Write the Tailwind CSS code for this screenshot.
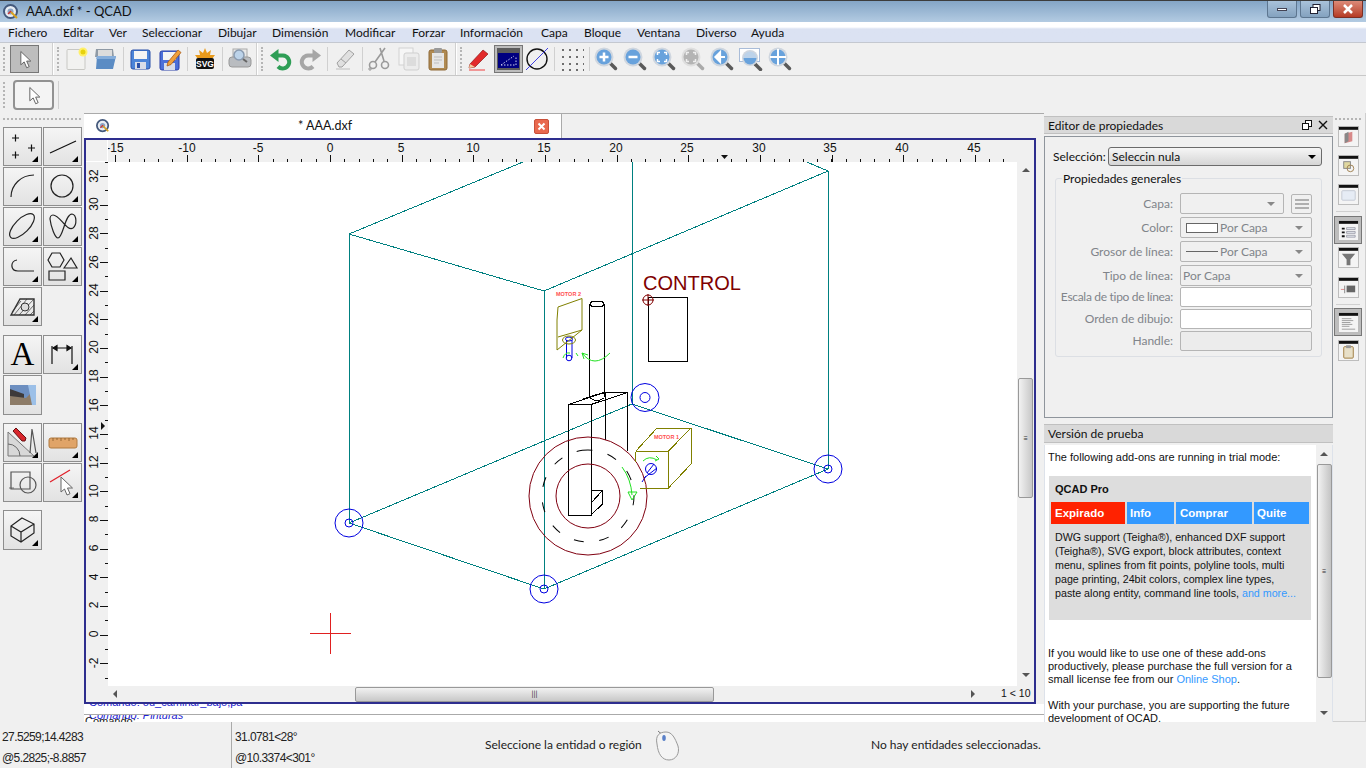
<!DOCTYPE html>
<html lang="es">
<head>
<meta charset="UTF-8">
<title>AAA.dxf * - QCAD</title>
<script src="https://cdn.jsdelivr.net/npm/@tailwindcss/browser@4"></script>
</head>
<body class="w-[1366px] h-[768px] overflow-hidden flex flex-col bg-[#f0f0f0] text-[12px] text-[#111] font-['Lato',sans-serif]">

<!-- shared icon parts -->
<svg class="hidden">
  <symbol id="arrow" viewBox="0 0 24 24"><path d="M7 3v16l4-3.500 3 7 3-1.300-3-6.700h5z" fill="#fff" stroke="#666" stroke-width="1.200"/></symbol>
  <symbol id="lens" viewBox="0 0 24 24"><path d="M15 15l6.500 6.500" stroke="#5a5a5a" stroke-width="3.500" stroke-linecap="round"/><circle cx="10" cy="10" r="9.500" fill="#cfd6df"/><circle cx="10" cy="10" r="7.500" fill="#68a2dc"/></symbol>
  <symbol id="win" viewBox="0 0 22 22"><rect x=".5" y=".5" width="21" height="21" fill="#f4f4f4" stroke="#bbb"/><rect x="1" y="1" width="20" height="3" fill="#111"/></symbol>
  <symbol id="qcad" viewBox="0 0 16 16"><circle cx="7.500" cy="7.500" r="6.500" fill="#e8edf3" stroke="#44597c" stroke-width="2"/><circle cx="7.500" cy="7.500" r="3" fill="#8ca4c4"/><path d="M8 8l6 6" stroke="#d9a21f" stroke-width="2"/><path d="M5 10l3-3" stroke="#c33" stroke-width="1.500"/></symbol>
</svg>

<!-- title bar -->
<header class="h-[22px] shrink-0 flex items-center border-t border-[#3c3c3c] bg-linear-to-b from-[#84a5c6] to-[#b3cbe2]">
  <svg class="w-4 h-4 ml-[3px]"><use href="#qcad"/></svg>
  <span class="ml-[7px] text-[#111] text-[13px]">AAA.dxf * - QCAD</span>
  <div class="ml-auto mr-[3px] flex gap-[3px] self-start">
    <div class="w-[30px] h-[17px] flex items-center justify-center rounded-b-[3px] border border-t-0 border-[#5d7690] bg-linear-to-b from-[#a9c2da] to-[#84a2bf]"><span class="w-[10px] h-[3px] bg-white border border-[#445]"></span></div>
    <div class="w-[30px] h-[17px] flex items-center justify-center rounded-b-[3px] border border-t-0 border-[#5d7690] bg-linear-to-b from-[#a9c2da] to-[#84a2bf]">
      <svg class="w-3 h-3" viewBox="0 0 12 12" fill="#fff" stroke="#223"><rect x="4" y="1.500" width="7" height="6"/><rect x="1.500" y="4.500" width="7" height="6"/></svg>
    </div>
    <div class="w-[30px] h-[17px] flex items-center justify-center rounded-b-[3px] border border-t-0 border-[#7c2f24] bg-linear-to-b from-[#dc8a78] to-[#b53a24]">
      <svg class="w-3 h-3" viewBox="0 0 12 12"><path d="M2 2l8 8M10 2l-8 8" stroke="#fff" stroke-width="2.500"/></svg>
    </div>
  </div>
</header>

<!-- menu bar -->
<nav class="h-[21px] shrink-0 flex items-end pb-[1px] border-b border-[#c4c8d0] bg-linear-to-b from-white from-[25%] to-[#dbe2f2] to-[35%] leading-[16px]">
  <span class="w-[55px] pl-2">Fichero</span>
  <span class="w-[46px] pl-2">Editar</span>
  <span class="w-[33px] pl-2">Ver</span>
  <span class="w-[76px] pl-2">Seleccionar</span>
  <span class="w-[54px] pl-2">Dibujar</span>
  <span class="w-[73px] pl-2">Dimensión</span>
  <span class="w-[67px] pl-2">Modificar</span>
  <span class="w-[48px] pl-2">Forzar</span>
  <span class="w-[81px] pl-2">Información</span>
  <span class="w-[43px] pl-2">Capa</span>
  <span class="w-[53px] pl-2">Bloque</span>
  <span class="w-[59px] pl-2">Ventana</span>
  <span class="w-[55px] pl-2">Diverso</span>
  <span class="w-[55px] pl-2">Ayuda</span>
</nav>

<!-- main toolbar -->
<div class="h-[33px] shrink-0 flex items-center border-b border-[#c8c8c8]">
  <i class="ml-[3px] w-[3px] h-[24px] border-l-2 border-dotted border-[#b5b5b5]"></i>
  <div class="ml-[4px] w-[29px] h-[28px] flex items-center justify-center border border-[#777] bg-[#bdbdbd]"><svg class="w-5 h-5"><use href="#arrow"/></svg></div>
  <i class="ml-[13px] w-[2px] h-[32px] bg-[#d0d0d0] border-r border-white"></i>
  <i class="ml-[3px] w-[3px] h-[24px] border-l-2 border-dotted border-[#b5b5b5]"></i>
  <!-- new -->
  <svg class="ml-[4px] w-6 h-6" viewBox="0 0 24 24"><rect x="3" y="2.500" width="18" height="20" rx="1" fill="#f2f2f0" stroke="#c8c8c4"/><circle cx="19" cy="5" r="4.500" fill="#fff06a"/><circle cx="19" cy="5" r="2.500" fill="#e7d20c"/></svg>
  <!-- open -->
  <svg class="ml-[5px] w-6 h-6" viewBox="0 0 24 24"><path d="M3 2h17l1 8H2z" fill="#8f9aa5"/><path d="M5 3h14v8H5z" fill="#dcdcdc"/><path d="M4 9h19l-3 13H3z" fill="#5b8cc4"/><path d="M4 9h19l-1 3H3z" fill="#86aedb"/></svg>
  <i class="ml-[6px] w-px h-[24px] bg-[#d0d0d0]"></i>
  <!-- save -->
  <svg class="ml-[4px] w-6 h-6" viewBox="0 0 24 24"><rect x="3" y="3" width="19" height="19" rx="2" fill="#4b84d8" stroke="#2b50a8"/><rect x="6" y="4" width="13" height="8" fill="#f4f4f4"/><rect x="7" y="15" width="11" height="7" fill="#d8dde8"/><rect x="9" y="16" width="3" height="5" fill="#2b50a8"/></svg>
  <!-- save as -->
  <svg class="ml-[6px] w-6 h-6" viewBox="0 0 24 24"><rect x="2" y="4" width="19" height="19" rx="2" fill="#4b6fd8" stroke="#2b40a8"/><rect x="5" y="5" width="13" height="8" fill="#f4f4f4"/><rect x="6" y="16" width="11" height="7" fill="#d8dde8"/><path d="M10 15l10-12 3 2.500-10 12-4 1.500z" fill="#f0a03c" stroke="#a85a18" stroke-width=".8"/></svg>
  <i class="ml-[5px] w-px h-[24px] bg-[#d0d0d0]"></i>
  <!-- svg export -->
  <svg class="ml-[5px] w-6 h-6" viewBox="0 0 24 24"><path d="M12 1l2 5 4-3-1 5 5 0-3 4H5L2 8h5L6 3l4 3z" fill="#e89a1c"/><rect x="3" y="11" width="18" height="11" rx="2" fill="#111"/><text x="12" y="20" text-anchor="middle" font-family="Liberation Sans" font-weight="700" font-size="8.500" fill="#fff">SVG</text></svg>
  <i class="ml-[5px] w-px h-[24px] bg-[#d0d0d0]"></i>
  <!-- print preview -->
  <svg class="ml-[5px] w-6 h-6" viewBox="0 0 24 24"><rect x="5" y="2" width="14" height="10" fill="#e8e8e8" stroke="#aaa"/><rect x="1" y="10" width="22" height="10" rx="3" fill="#b9bcc0" stroke="#999"/><circle cx="11" cy="8" r="5" fill="#bcd3ea" stroke="#8a9bb0" stroke-width="1.500"/><path d="M15 12l4 3" stroke="#666" stroke-width="2"/></svg>
  <i class="ml-[4px] w-[2px] h-[32px] bg-[#d0d0d0] border-r border-white"></i>
  <i class="ml-[3px] w-[3px] h-[24px] border-l-2 border-dotted border-[#b5b5b5]"></i>
  <!-- undo / redo -->
  <svg class="ml-[5px] w-6 h-6" viewBox="0 0 24 24"><path d="M7 8.500h7a6.500 6.500 0 1 1-5 11" fill="none" stroke="#2f9e56" stroke-width="4"/><path d="M9.500 2v13L1 8.500z" fill="#2f9e56"/></svg>
  <svg class="ml-[5px] w-6 h-6" viewBox="0 0 24 24"><path d="M17 8.500h-7a6.500 6.500 0 1 0 5 11" fill="none" stroke="#a6a6a6" stroke-width="4"/><path d="M14.500 2v13L23 8.500z" fill="#a6a6a6"/></svg>
  <i class="ml-[5px] w-px h-[24px] bg-[#d0d0d0]"></i>
  <!-- eraser -->
  <svg class="ml-[5px] w-6 h-6" viewBox="0 0 24 24"><path d="M4 16L16 3l5 4-12 13H6z" fill="#e0e0e0" stroke="#a0a0a0"/><path d="M8 12l5 4" stroke="#a0a0a0"/><path d="M3 22h14" stroke="#cfcfcf" stroke-width="1.500"/></svg>
  <i class="ml-[5px] w-px h-[24px] bg-[#d0d0d0]"></i>
  <!-- cut / copy / paste -->
  <svg class="ml-[4px] w-6 h-6" viewBox="0 0 24 24" fill="none" stroke="#9a9a9a" stroke-width="1.600"><path d="M18 1L8 15M13 1l4 13"/><circle cx="6" cy="18" r="3.500"/><circle cx="18" cy="18" r="3.500"/><path d="M1 22h4M3 20v4" stroke-width="1"/></svg>
  <svg class="ml-[6px] w-6 h-6" viewBox="0 0 24 24"><rect x="2" y="1" width="14" height="17" fill="#f6f6f6" stroke="#d2d2d2"/><rect x="7" y="6" width="15" height="17" rx="2" fill="#ececec" stroke="#cfcfcf"/><rect x="10" y="10" width="9" height="9" fill="#dcdcdc"/></svg>
  <svg class="ml-[5px] w-6 h-6" viewBox="0 0 24 24"><rect x="3" y="3" width="18" height="20" rx="2" fill="#b08a52" stroke="#8f6a38"/><rect x="6" y="6" width="12" height="15" fill="#e6e6e6"/><rect x="8" y="1" width="8" height="5" rx="1" fill="#9a9a9a"/><path d="M8 10h8M8 13h8M8 16h5" stroke="#bdbdbd"/></svg>
  <i class="ml-[5px] w-[2px] h-[32px] bg-[#d0d0d0] border-r border-white"></i>
  <i class="ml-[3px] w-[3px] h-[24px] border-l-2 border-dotted border-[#b5b5b5]"></i>
  <!-- pen -->
  <svg class="ml-[4px] w-6 h-6" viewBox="0 0 24 24"><path d="M3 17L16 3l5 4L8 20l-6 1z" fill="#e22b2b" stroke="#8f1a1a" stroke-width=".7"/><path d="M3 17l5 3-6 1z" fill="#f2cfa0"/><path d="M2 23h16" stroke="#f07070" stroke-width="1.400"/></svg>
  <!-- paper view, pressed -->
  <div class="ml-[3px] w-[29px] h-[28px] flex items-center justify-center border border-[#777] bg-[#bdbdbd]">
    <svg class="w-[23px] h-[22px]" viewBox="0 0 23 22"><rect width="23" height="22" fill="#5c5c5c"/><rect x="1" y="5" width="21" height="15" fill="#000080"/><path d="M4 17h15V8M4 17L17 8" stroke="#cfd2ee" stroke-dasharray="1.500 1.500" fill="none"/></svg>
  </div>
  <!-- circle with slash -->
  <svg class="ml-[2px] w-6 h-6" viewBox="0 0 24 24"><circle cx="12" cy="12" r="10" fill="none" stroke="#111" stroke-width="1.400"/><path d="M1 23L23 1" stroke="#3f3fe0"/></svg>
  <i class="ml-[5px] w-px h-[24px] bg-[#d0d0d0]"></i>
  <!-- grid -->
  <svg class="ml-[5px] w-6 h-6" viewBox="0 0 24 24" fill="none" stroke="#6e6e6e" stroke-width="2" stroke-dasharray="2 5"><path d="M2 3h22M2 10h22M2 17h22M2 23h22"/></svg>
  <i class="ml-[5px] w-px h-[24px] bg-[#d0d0d0]"></i>
  <!-- zoom tools -->
  <svg class="ml-[4px] w-6 h-6" viewBox="0 0 24 24"><use href="#lens"/><path d="M5.500 10h9M10 5.500v9" stroke="#fff" stroke-width="2.500"/></svg>
  <svg class="ml-[5px] w-6 h-6" viewBox="0 0 24 24"><use href="#lens"/><path d="M5.500 10h9" stroke="#fff" stroke-width="2.500"/></svg>
  <svg class="ml-[5px] w-6 h-6" viewBox="0 0 24 24"><use href="#lens"/><path d="M5.500 8V5.500H8M12 5.500h2.500V8M14.500 12v2.500H12M8 14.500H5.500V12" stroke="#fff" stroke-width="1.500" fill="none"/></svg>
  <svg class="ml-[5px] w-6 h-6" viewBox="0 0 24 24"><path d="M15 15l6.500 6.500" stroke="#aaa" stroke-width="3.500" stroke-linecap="round"/><circle cx="10" cy="10" r="9.500" fill="#dfdfdf"/><circle cx="10" cy="10" r="7.500" fill="#b4b4b4"/><path d="M5.500 8V5.500H8M12 5.500h2.500V8M14.500 12v2.500H12M8 14.500H5.500V12" stroke="#eee" stroke-width="1.500" fill="none"/></svg>
  <svg class="ml-[5px] w-6 h-6" viewBox="0 0 24 24"><use href="#lens"/><path d="M15 10H8M10 5.500L5.500 10l4.500 4.500z" stroke="#fff" stroke-width="2.200" fill="#fff"/></svg>
  <svg class="ml-[5px] w-6 h-6" viewBox="0 0 24 24"><rect x=".5" y="1.500" width="20" height="13" fill="#fff" stroke="#a9bcd8"/><path d="M16 17l5.500 5.500" stroke="#5a5a5a" stroke-width="3.500" stroke-linecap="round"/><circle cx="11" cy="11" r="8" fill="#cfd6df"/><path d="M4.500 11a6.500 6.500 0 0 0 13 0z" fill="#68a2dc"/><path d="M4.500 11a6.500 6.500 0 0 1 13 0z" fill="#bdd3ea"/></svg>
  <svg class="ml-[5px] w-6 h-6" viewBox="0 0 24 24"><use href="#lens"/><path d="M10 2v16M2 10h16" stroke="#fff" stroke-width="2"/></svg>
</div>

<!-- tool options bar -->
<div class="h-[37px] shrink-0 flex items-center">
  <i class="ml-[3px] w-[3px] h-[26px] border-l-2 border-dotted border-[#b5b5b5]"></i>
  <div class="ml-[7px] w-[41px] h-[30px] flex items-center justify-center rounded-[4px] border-2 border-[#929292] bg-[#f4f4f4]"><svg class="w-5 h-5"><use href="#arrow"/></svg></div>
  <i class="ml-[4px] w-px h-[28px] bg-[#d0d0d0]"></i>
</div>

<main class="h-[609px] shrink-0 flex">
  <!-- left tools -->
  <aside class="w-[84px] shrink-0 pl-[3px]">
    <i class="block mt-[5px] h-[3px] w-[78px] border-t-2 border-dotted border-[#b5b5b5]"></i>
    <div class="mt-[6px] grid grid-cols-[39px_39px] gap-x-px gap-y-px">
      <div class="relative h-[39px] border border-[#8e8e8e] bg-linear-to-b from-[#f5f5f5] to-[#e2e2e2]"><svg class="w-full h-full" viewBox="0 0 37 37" fill="none" stroke="#111" stroke-width="1.200"><path d="M8 10h7M11.500 6.500v7M24 20h7M27.500 16.500v7M8 27h7M11.500 23.500v7"/></svg><span class="absolute right-[3px] bottom-[3px] border-l-[6px] border-l-transparent border-b-[6px] border-b-black"></span></div>
      <div class="relative h-[39px] border border-[#8e8e8e] bg-linear-to-b from-[#f5f5f5] to-[#e2e2e2]"><svg class="w-full h-full" viewBox="0 0 37 37" fill="none" stroke="#111" stroke-width="1.200"><path d="M6 25L32 13"/></svg><span class="absolute right-[3px] bottom-[3px] border-l-[6px] border-l-transparent border-b-[6px] border-b-black"></span></div>
      <div class="relative h-[39px] border border-[#8e8e8e] bg-linear-to-b from-[#f5f5f5] to-[#e2e2e2]"><svg class="w-full h-full" viewBox="0 0 37 37" fill="none" stroke="#222" stroke-width="1.200"><path d="M7 29C7 17 17 7 30 7"/></svg><span class="absolute right-[3px] bottom-[3px] border-l-[6px] border-l-transparent border-b-[6px] border-b-black"></span></div>
      <div class="relative h-[39px] border border-[#8e8e8e] bg-linear-to-b from-[#f5f5f5] to-[#e2e2e2]"><svg class="w-full h-full" viewBox="0 0 37 37" fill="none" stroke="#222" stroke-width="1.200"><circle cx="18" cy="18" r="11"/></svg><span class="absolute right-[3px] bottom-[3px] border-l-[6px] border-l-transparent border-b-[6px] border-b-black"></span></div>
      <div class="relative h-[39px] border border-[#8e8e8e] bg-linear-to-b from-[#f5f5f5] to-[#e2e2e2]"><svg class="w-full h-full" viewBox="0 0 37 37" fill="none" stroke="#222" stroke-width="1.200"><ellipse cx="18" cy="18" rx="16" ry="7" transform="rotate(-45 18 18)"/></svg><span class="absolute right-[3px] bottom-[3px] border-l-[6px] border-l-transparent border-b-[6px] border-b-black"></span></div>
      <div class="relative h-[39px] border border-[#8e8e8e] bg-linear-to-b from-[#f5f5f5] to-[#e2e2e2]"><svg class="w-full h-full" viewBox="0 0 37 37" fill="none" stroke="#222" stroke-width="1.200"><path d="M6 11C7 19 11 30 14 30C19 30 21 6 28 6C33 7 33 17 29 20C23 24 16 7 9 7C7 7 6 9 6 11Z"/></svg><span class="absolute right-[3px] bottom-[3px] border-l-[6px] border-l-transparent border-b-[6px] border-b-black"></span></div>
      <div class="relative h-[39px] border border-[#8e8e8e] bg-linear-to-b from-[#f5f5f5] to-[#e2e2e2]"><svg class="w-full h-full" viewBox="0 0 37 37" fill="none" stroke="#222" stroke-width="1.200"><path d="M30 23H14C6 23 6 13 13 12"/></svg><span class="absolute right-[3px] bottom-[3px] border-l-[6px] border-l-transparent border-b-[6px] border-b-black"></span></div>
      <div class="relative h-[39px] border border-[#8e8e8e] bg-linear-to-b from-[#f5f5f5] to-[#e2e2e2]"><svg class="w-full h-full" viewBox="0 0 37 37" fill="none" stroke="#222" stroke-width="1.200"><path d="M4 12l4-7h8l4 7-4 7H8zM20 20l7-10 6 10zM5 23h16v9H5z"/></svg><span class="absolute right-[3px] bottom-[3px] border-l-[6px] border-l-transparent border-b-[6px] border-b-black"></span></div>
      <div class="relative h-[39px] border border-[#8e8e8e] bg-linear-to-b from-[#f5f5f5] to-[#e2e2e2]"><svg class="w-full h-full" viewBox="0 0 37 37" fill="none" stroke="#333" stroke-width="1"><path d="M7 27l9-16h14v16z" stroke-width="1.400"/><path d="M10 27l13-16M15 27l15-16M21 27l9-10M26 27l4-4M8 24l9-11" stroke-width=".7"/><circle cx="21" cy="19" r="4" fill="#ddd"/></svg><span class="absolute right-[3px] bottom-[3px] border-l-[6px] border-l-transparent border-b-[6px] border-b-black"></span></div>
    </div>
    <div class="mt-[9px] grid grid-cols-[39px_39px] gap-x-px gap-y-px">
      <div class="h-[39px] flex items-center justify-center border border-[#8e8e8e] bg-linear-to-b from-[#f5f5f5] to-[#e2e2e2] text-[33px] leading-none text-black font-['Liberation_Serif',serif]">A</div>
      <div class="relative h-[39px] border border-[#8e8e8e] bg-linear-to-b from-[#f5f5f5] to-[#e2e2e2]"><svg class="w-full h-full" viewBox="0 0 37 37" fill="none" stroke="#111" stroke-width="1.200"><path d="M8 10v18M28 10v18M9 12h18"/><path d="M9 12l4-2.500v5zM27 12l-4-2.500v5z" fill="#111"/></svg><span class="absolute right-[3px] bottom-[3px] border-l-[6px] border-l-transparent border-b-[6px] border-b-black"></span></div>
      <div class="h-[40px] border border-[#8e8e8e] bg-linear-to-b from-[#f5f5f5] to-[#e2e2e2]"><svg class="w-full h-full" viewBox="0 0 37 38"><rect x="6" y="9" width="26" height="20" fill="#6d8fc0"/><path d="M6 13l14 5v11H6z" fill="#3e3a3a"/><path d="M6 20l16 2 4-4 6 11H6z" fill="#8d7c68"/><path d="M24 9h8v20h-4z" fill="#9cc0e8"/></svg></div>
    </div>
    <div class="mt-[8px] grid grid-cols-[39px_39px] gap-x-px gap-y-px">
      <div class="relative h-[39px] border border-[#8e8e8e] bg-linear-to-b from-[#f5f5f5] to-[#e2e2e2]"><svg class="w-full h-full" viewBox="0 0 37 37" fill="none"><path d="M4 32V8l26 24z" fill="#d8d8d8" stroke="#777"/><path d="M4 20a12 12 0 0 1 12 12" stroke="#666"/><path d="M9 7l3-3 10 10-1 3-3 0z" fill="#d8262c" stroke="#611"/><path d="M28 5l-2 24M28 5l4 24" stroke="#555" stroke-width="1.200"/></svg><span class="absolute right-[3px] bottom-[3px] border-l-[6px] border-l-transparent border-b-[6px] border-b-black"></span></div>
      <div class="relative h-[39px] border border-[#8e8e8e] bg-linear-to-b from-[#f5f5f5] to-[#e2e2e2]"><svg class="w-full h-full" viewBox="0 0 37 37"><rect x="5" y="14" width="28" height="10" rx="2" fill="#e0a468" stroke="#b07a40"/><path d="M9 14v3M13 14v2M17 14v3M21 14v2M25 14v3M29 14v2" stroke="#7a5020" stroke-width=".7"/></svg><span class="absolute right-[3px] bottom-[3px] border-l-[6px] border-l-transparent border-b-[6px] border-b-black"></span></div>
      <div class="h-[39px] border border-[#8e8e8e] bg-linear-to-b from-[#f5f5f5] to-[#e2e2e2]"><svg class="w-full h-full" viewBox="0 0 37 37" fill="none" stroke="#555" stroke-width="1.200"><path d="M7 8h19v17H7z"/><circle cx="24" cy="21" r="8"/><path d="M5 24h5" stroke-width=".8"/></svg></div>
      <div class="relative h-[39px] border border-[#8e8e8e] bg-linear-to-b from-[#f5f5f5] to-[#e2e2e2]"><svg class="w-full h-full" viewBox="0 0 37 37"><path d="M6 18L26 6" stroke="#e0202a" stroke-width="1.300"/><path d="M17 13v15l3.500-3 2.500 6 3-1.300-2.500-5.700h5z" fill="#fff" stroke="#666"/></svg><span class="absolute right-[3px] bottom-[3px] border-l-[6px] border-l-transparent border-b-[6px] border-b-black"></span></div>
    </div>
    <div class="mt-[8px] relative w-[39px] h-[40px] border border-[#8e8e8e] bg-linear-to-b from-[#f5f5f5] to-[#e2e2e2]"><svg class="w-full h-full" viewBox="0 0 37 38" fill="none" stroke="#222" stroke-width="1.200"><path d="M18 7l12 6v9l-13 9-10-6V15zM7 15l10 6 13-8M17 21v10"/></svg><span class="absolute right-[3px] bottom-[3px] border-l-[6px] border-l-transparent border-b-[6px] border-b-black"></span></div>
  </aside>

  <!-- drawing area -->
  <section class="w-[960px] shrink-0 flex flex-col">
    <div class="h-[25px] shrink-0 flex border-t border-[#aaa]">
      <div class="w-[478px] flex items-center bg-white border-r border-[#aaa]">
        <svg class="w-[14px] h-[14px] ml-[12px]"><use href="#qcad"/></svg>
        <span class="ml-[188px] w-[70px] text-[12.500px]">* AAA.dxf</span>
        <span class="ml-[166px] w-[15px] h-[15px] flex items-center justify-center rounded-[2px] bg-[#e9694e] border border-[#c9503a]"><svg class="w-[9px] h-[9px]" viewBox="0 0 9 9"><path d="M1.500 1.500l6 6M7.500 1.500l-6 6" stroke="#fff" stroke-width="2"/></svg></span>
      </div>
    </div>
    <!-- frame -->
    <div class="w-[952px] h-[566px] shrink-0 border-2 border-[#2e2e8e] flex flex-col">
      <div class="h-[22px] shrink-0 flex">
        <div class="w-[22px] border-r border-b border-white"></div>
        <svg class="w-[909px] h-[22px]" viewBox="108 140 909 22" font-family="Liberation Sans" font-size="12" fill="#111" text-anchor="middle">
          <path d="M100.670 160.500H1017" stroke="#111" stroke-width="3" stroke-dasharray="1 13.330" shape-rendering="crispEdges"/>
          <path d="M115 158.500H1017" stroke="#111" stroke-width="7" stroke-dasharray="1 70.650" shape-rendering="crispEdges"/>
          <text x="115" y="152">-15</text><text x="187" y="152">-10</text><text x="258" y="152">-5</text><text x="330" y="152">0</text><text x="401" y="152">5</text><text x="473" y="152">10</text><text x="544" y="152">15</text><text x="616" y="152">20</text><text x="687" y="152">25</text><text x="759" y="152">30</text><text x="830" y="152">35</text><text x="902" y="152">40</text><text x="974" y="152">45</text>
          <path d="M721 155h7l-3.500 4z" fill="#111"/>
        </svg>
      </div>
      <div class="flex-1 flex min-h-0">
        <svg class="w-[22px] h-[524px]" viewBox="86 162 22 524" font-family="Liberation Sans" font-size="12" fill="#111" text-anchor="middle">
          <path d="M106.500 161.670V686" stroke="#111" stroke-width="3" stroke-dasharray="1 13.330" shape-rendering="crispEdges"/>
          <path d="M104 176V686" stroke="#111" stroke-width="8" stroke-dasharray="1 27.660" shape-rendering="crispEdges"/>
          <text transform="translate(98 176) rotate(-90)">32</text><text transform="translate(98 204) rotate(-90)">30</text><text transform="translate(98 233) rotate(-90)">28</text><text transform="translate(98 262) rotate(-90)">26</text><text transform="translate(98 290) rotate(-90)">24</text><text transform="translate(98 319) rotate(-90)">22</text><text transform="translate(98 347) rotate(-90)">20</text><text transform="translate(98 376) rotate(-90)">18</text><text transform="translate(98 405) rotate(-90)">16</text><text transform="translate(98 433) rotate(-90)">14</text><text transform="translate(98 462) rotate(-90)">12</text><text transform="translate(98 491) rotate(-90)">10</text><text transform="translate(98 519) rotate(-90)">8</text><text transform="translate(98 548) rotate(-90)">6</text><text transform="translate(98 577) rotate(-90)">4</text><text transform="translate(98 605) rotate(-90)">2</text><text transform="translate(98 634) rotate(-90)">0</text><text transform="translate(98 663) rotate(-90)">-2</text>
          <path d="M101 422v8l4-4z" fill="#111"/>
        </svg>
        <svg class="w-[909px] h-[524px] bg-white" viewBox="108 162 909 524" fill="none">
          <!-- outer box -->
          <g stroke="#008080" shape-rendering="crispEdges">
            <path d="M349 234L544 291L828 171L795 157M349 234L523 162M349 234V523L544 589L828 469V171M544 291V589M632 157V404M349 523L632 404L828 469"/>
          </g>
          <!-- blue markers -->
          <g stroke="#0000e0">
            <circle cx="349" cy="523" r="14"/><circle cx="349" cy="523" r="4"/>
            <circle cx="544" cy="589" r="14"/><circle cx="544" cy="589" r="4"/>
            <circle cx="828" cy="469" r="14"/><circle cx="828" cy="469" r="4"/>
            <circle cx="645" cy="397.500" r="14"/><circle cx="645" cy="397.500" r="5"/>
            <circle cx="651" cy="469" r="5.500"/><path d="M654 464l-7 9M657 468l-13 10M642 482l4-6"/>
            <path d="M566.500 340v18M572 340v18"/><circle cx="569" cy="358" r="2.800"/><ellipse cx="569" cy="339" rx="3.500" ry="2"/>
          </g>
          <!-- control box -->
          <text x="643" y="290" font-family="Liberation Sans" font-size="21" fill="#800000" textLength="98" lengthAdjust="spacingAndGlyphs">CONTROL</text>
          <path d="M648.500 297.500h38.500v64h-38.500z" stroke="#000" shape-rendering="crispEdges"/>
          <circle cx="648" cy="300" r="5" stroke="#800000"/><path d="M642 300h12M648 294v12" stroke="#800000"/>
          <!-- column -->
          <g stroke="#000" shape-rendering="crispEdges">
            <path d="M589.500 304V396M604 304V397"/><ellipse cx="597" cy="304" rx="7" ry="2.800"/><path d="M590 398q7 5 14 0"/>
            <path d="M568.500 404.500V515.500H591V404.500H568.500L605 392.500H627.500L591 404.500M627.500 392.500V451M605 392.500V440M583 399L605 392"/>
            <path d="M591 490.500H602.500V504L591 515M591 503L602.500 490.500"/>
          </g>
          <!-- wheel -->
          <g stroke="#800010">
            <circle cx="588" cy="496" r="59"/><circle cx="588" cy="496" r="32"/>
          </g>
          <circle cx="588" cy="496" r="46" stroke="#000" stroke-dasharray="10 15.700" transform="rotate(-97 588 496)"/>
          <!-- motor 1 -->
          <g stroke="#808000" shape-rendering="crispEdges">
            <path d="M635.500 451.500H668V488.500H640M635.500 451.500V462M635.500 451.500L657 428H691V464L668 488.500M668 451.500L691 428"/>
          </g>
          <text x="654" y="439" font-family="Liberation Sans" font-size="5.500" font-weight="700" fill="#ff5050">MOTOR 1</text>
          <!-- motor 2 -->
          <g stroke="#808000">
            <path d="M558 307L582 298.500V330L557 350V320ZM558 337L582 330"/><ellipse cx="569" cy="340" rx="6.500" ry="4"/>
          </g>
          <text x="556" y="296" font-family="Liberation Sans" font-size="5.500" font-weight="700" fill="#ff5050">MOTOR 2</text>
          <!-- rotation arrows -->
          <g stroke="#20e020">
            <path d="M563 358q2-6 7-5M576 353l2 3"/>
            <path d="M582 353q12 16 28 0M582 353l2 6M582 353l6 2"/>
            <path d="M622 467q9 12 10 28M628 492h9l-5 8z"/>
            <path d="M643 461q6-6 14-1M659 459l-3-3M659 459l-4 2"/>
          </g>
          <!-- crosshair -->
          <path d="M310 633.500H351M330.500 613V654" stroke="#e02020" shape-rendering="crispEdges"/>
        </svg>
        <div class="w-[17px] flex flex-col items-center bg-[#f0f0f0]">
          <i class="mt-[6px] border-x-[4px] border-x-transparent border-b-[4px] border-b-[#555]"></i>
          <div class="mt-[206px] w-[15px] h-[120px] rounded-[2px] flex items-center justify-center border border-[#999] bg-linear-to-r from-[#f2f2f2] to-[#c8c8c8] text-[8px] leading-none text-[#333]">≡</div>
          <i class="mt-[175px] border-x-[4px] border-x-transparent border-t-[4px] border-t-[#555]"></i>
        </div>
      </div>
      <div class="h-[16px] shrink-0 flex items-center">
        <div class="w-[22px]"></div>
        <i class="ml-[5px] border-y-[4px] border-y-transparent border-r-[4px] border-r-[#555]"></i>
        <div class="ml-[238px] w-[359px] h-[15px] rounded-[2px] flex items-center justify-center border border-[#999] bg-linear-to-b from-[#f2f2f2] to-[#c8c8c8] text-[8px] leading-none text-[#333]">|||</div>
        <i class="ml-[257px] border-y-[4px] border-y-transparent border-l-[4px] border-l-[#555]"></i>
        <span class="ml-[26px] text-[10.500px] whitespace-nowrap font-['Liberation_Sans',sans-serif]">1 &lt; 10</span>
      </div>
    </div>
    <!-- command history -->
    <div class="relative h-[18px] w-[960px] overflow-hidden bg-white text-[11px] leading-[13px] text-[#2020d0] font-['Liberation_Sans',sans-serif]">
      <div class="h-[10px] overflow-hidden"><p class="-mt-[8px] pl-[5px]">Comando: ou_caminar_bajo,pa</p></div>
      <div class="h-[8px] border-t border-[#aaa] overflow-hidden"><p class="-mt-[6px] pl-[5px] italic">Comando: Pinturas</p></div>
      <span class="absolute left-[1px] top-[11px] text-[#222]">Comando:</span>
    </div>
  </section>

  <!-- right docks -->
  <aside class="w-[289px] shrink-0 pt-[3px] flex flex-col">
    <div class="h-[18px] flex items-center pl-[4px] pr-[4px] bg-[#d9d9d9] border-y border-[#c0c0c0]">
      <span class="pt-[1px]">Editor de propiedades</span>
      <svg class="ml-auto w-[10px] h-[10px]" viewBox="0 0 10 10" fill="#fff" stroke="#111"><rect x="3.500" y=".5" width="6" height="6"/><rect x=".5" y="3.500" width="6" height="6"/></svg>
      <svg class="ml-[6px] mr-[1px] w-[10px] h-[10px]" viewBox="0 0 10 10"><path d="M1 1l8 8M9 1L1 9" stroke="#111" stroke-width="1.400"/></svg>
    </div>
    <div class="mt-[2px] h-[282px] shrink-0 border border-[#8f959c] pl-[8px] pt-[10px]">
      <div class="flex items-center">
        <span class="w-[55px]">Selección:</span>
        <div class="w-[214px] h-[19px] flex items-center pl-[3px] pr-[5px] rounded-[3px] border border-[#6b6b6b] bg-linear-to-b from-[#f6f6f6] to-[#d5d5d5]"><span class="leading-none">Seleccin nula</span><i class="ml-auto border-x-[4px] border-x-transparent border-t-[4px] border-t-black"></i></div>
      </div>
      <fieldset class="mt-[5px] ml-[2px] w-[267px] h-[186px] rounded-[3px] border border-[#dcdfe4] px-0">
        <legend class="ml-[6px] px-px leading-[15px]">Propiedades generales</legend>
        <div class="text-[#80848a]">
          <div class="mt-[7px] flex items-center h-[21px]"><span class="w-[117px] text-right whitespace-nowrap">Capa:</span>
            <div class="ml-[7px] w-[104px] h-[21px] flex items-center justify-end pr-[8px] rounded-[2px] border border-[#b5b5b5] bg-[#f0f0f0]"><i class="border-x-[4px] border-x-transparent border-t-[4px] border-t-[#888]"></i></div>
            <div class="ml-[7px] w-[21px] h-[20px] flex items-center justify-center rounded-[2px] border border-[#b5b5b5]"><svg class="w-[14px] h-[12px]" viewBox="0 0 14 12" stroke="#999" stroke-width="1.500"><path d="M0 2h14M0 6h14M0 10h14"/></svg></div></div>
          <div class="mt-[3px] flex items-center h-[21px]"><span class="w-[117px] text-right whitespace-nowrap">Color:</span>
            <div class="ml-[7px] w-[132px] h-[21px] flex items-center pl-[5px] pr-[8px] rounded-[2px] border border-[#b5b5b5] bg-[#f0f0f0]"><i class="w-[32px] h-[10px] border border-[#666] bg-white"></i><span class="ml-[2px]">Por Capa</span><i class="ml-auto border-x-[4px] border-x-transparent border-t-[4px] border-t-[#888]"></i></div></div>
          <div class="mt-[3px] flex items-center h-[21px]"><span class="w-[117px] text-right whitespace-nowrap">Grosor de línea:</span>
            <div class="ml-[7px] w-[132px] h-[21px] flex items-center pl-[5px] pr-[8px] rounded-[2px] border border-[#b5b5b5] bg-[#f0f0f0]"><i class="w-[32px] h-px bg-[#666]"></i><span class="ml-[2px]">Por Capa</span><i class="ml-auto border-x-[4px] border-x-transparent border-t-[4px] border-t-[#888]"></i></div></div>
          <div class="mt-[3px] flex items-center h-[21px]"><span class="w-[117px] text-right whitespace-nowrap">Tipo de línea:</span>
            <div class="ml-[7px] w-[132px] h-[21px] flex items-center pl-[2px] pr-[8px] rounded-[2px] border border-[#b5b5b5] bg-[#f0f0f0]"><span>Por Capa</span><i class="ml-auto border-x-[4px] border-x-transparent border-t-[4px] border-t-[#888]"></i></div></div>
          <div class="mt-[1px] flex items-center h-[20px]"><span class="w-[117px] text-right whitespace-nowrap tracking-[-0.3px]">Escala de tipo de línea:</span><div class="ml-[7px] w-[132px] h-[20px] rounded-[2px] border border-[#b5b5b5] bg-white"></div></div>
          <div class="mt-[2px] flex items-center h-[20px]"><span class="w-[117px] text-right whitespace-nowrap">Orden de dibujo:</span><div class="ml-[7px] w-[132px] h-[20px] rounded-[2px] border border-[#b5b5b5] bg-white"></div></div>
          <div class="mt-[2px] flex items-center h-[20px]"><span class="w-[117px] text-right whitespace-nowrap">Handle:</span><div class="ml-[7px] w-[132px] h-[20px] rounded-[2px] border border-[#b5b5b5] bg-[#ececec]"></div></div>
        </div>
      </fieldset>
    </div>
    <div class="mt-[6px] h-[19px] flex items-center px-[4px] bg-[#d9d9d9] border-y border-[#c0c0c0]"><span class="pt-[1px]">Versión de prueba</span></div>
    <div class="mt-[2px] h-[277px] shrink-0 flex overflow-hidden border-x border-[#dde2ea]">
      <div class="w-[271px] shrink-0 bg-white pl-[3px] pt-[5px] text-[11px] leading-[13px] text-[#111] font-['Liberation_Sans',sans-serif]">
        <p class="h-[14px] leading-[14px]">The following add-ons are running in trial mode:</p>
        <div class="mt-[12px] ml-[1px] w-[262px] h-[144px] bg-[#dddddd] pl-[2px] pt-[5px]">
          <p class="pl-[4px] h-[16px] leading-[16px] font-bold">QCAD Pro</p>
          <div class="mt-[5px] flex gap-[2px] h-[22px] leading-[22px] text-white font-bold text-[11.500px]">
            <span class="w-[74px] pl-[4px] bg-[#ff2200]">Expirado</span>
            <span class="w-[47px] pl-[3px] bg-[#3399ff]">Info</span>
            <span class="w-[76px] pl-[4px] bg-[#3399ff]">Comprar</span>
            <span class="w-[55px] pl-[3px] bg-[#3399ff]">Quite</span>
          </div>
          <p class="mt-[6px] pl-[4px] text-[10.700px] leading-[14px] whitespace-nowrap">DWG support (Teigha®), enhanced DXF support<br>(Teigha®), SVG export, block attributes, context<br>menu, splines from fit points, polyline tools, multi<br>page printing, 24bit colors, complex line types,<br>paste along entity, command line tools, <span class="text-[#3399ff]">and more...</span></p>
        </div>
        <p class="mt-[27px] whitespace-nowrap">If you would like to use one of these add-ons<br>productively, please purchase the full version for a<br>small license fee from our <span class="text-[#3399ff]">Online Shop</span>.</p>
        <p class="mt-[13px] whitespace-nowrap">With your purchase, you are supporting the future<br>development of QCAD.</p>
      </div>
      <div class="w-[16px] shrink-0 flex flex-col items-center bg-[#f0f0f0]">
        <i class="mt-[7px] border-x-[4px] border-x-transparent border-b-[4px] border-b-[#555]"></i>
        <div class="mt-[8px] w-[15px] h-[214px] rounded-[2px] flex items-center justify-center border border-[#999] bg-linear-to-r from-[#f2f2f2] to-[#c4c4c4] text-[8px] leading-none text-[#333]">≡</div>
        <i class="mt-[33px] border-x-[4px] border-x-transparent border-t-[4px] border-t-[#555]"></i>
      </div>
    </div>
  </aside>

  <!-- dock icons strip -->
  <aside class="w-[33px] shrink-0 flex flex-col items-center pr-[2px] border-r border-[#cfcfcf] border-b">
    <i class="mt-[5px] w-[26px] border-t-2 border-dotted border-[#b5b5b5]"></i>
    <svg class="mt-[6px] w-[21px] h-[21px]" viewBox="0 0 22 22"><use href="#win"/><path d="M7 8l8-2v10l-8 2z" fill="#d88a8a"/><path d="M7 8l4-2v10l-4 2z" fill="#888"/></svg>
    <svg class="mt-[8px] w-[21px] h-[21px]" viewBox="0 0 22 22"><use href="#win"/><rect x="6" y="7" width="7" height="7" fill="#e0d8a0" stroke="#888"/><circle cx="13" cy="14" r="3.500" fill="none" stroke="#a08050"/></svg>
    <svg class="mt-[8px] w-[21px] h-[21px]" viewBox="0 0 22 22"><use href="#win"/><rect x="4" y="7" width="14" height="10" rx="1" fill="#e6ecf5" stroke="#c4cad4"/></svg>
    <i class="mt-[6px] w-[24px] h-px bg-[#d0d0d0]"></i>
    <div class="mt-[4px] w-[28px] h-[28px] flex items-center justify-center border border-[#777] bg-[#bdbdbd]"><svg class="w-[21px] h-[21px]" viewBox="0 0 22 22"><use href="#win"/><path d="M4 8h3v2H4zM4 12h3v2H4zM4 16h3v2H4z" fill="#111"/><path d="M9 8h9v2H9zM9 12h9v2H9zM9 16h9v2H9z" fill="#e4e8ee" stroke="#778"  stroke-width=".6"/></svg></div>
    <svg class="mt-[3px] w-[21px] h-[21px]" viewBox="0 0 22 22"><use href="#win"/><path d="M4 7h14l-5 6v6h-4v-6z" fill="#777"/></svg>
    <svg class="mt-[9px] w-[21px] h-[21px]" viewBox="0 0 22 22"><use href="#win"/><path d="M3 13h4" stroke="#d88"/><path d="M7 9v8" stroke="#888"/><rect x="9" y="9" width="9" height="7" fill="#666"/></svg>
    <i class="mt-[6px] w-[24px] h-px bg-[#d0d0d0]"></i>
    <div class="mt-[3px] w-[28px] h-[28px] flex items-center justify-center border border-[#777] bg-[#bdbdbd]"><svg class="w-[21px] h-[21px]" viewBox="0 0 22 22"><use href="#win"/><path d="M4 7h10M4 9h12M4 11h9M4 13h11M4 15h8M4 18h14" stroke="#888" stroke-width=".8"/></svg></div>
    <svg class="mt-[4px] w-[21px] h-[21px]" viewBox="0 0 22 22"><use href="#win"/><rect x="6" y="7" width="10" height="12" rx="1" fill="#e8e0c8" stroke="#a07c40"/><rect x="8.500" y="5.500" width="5" height="3" fill="#999"/></svg>
  </aside>
</main>

<!-- status bar -->
<footer class="h-[46px] shrink-0 flex items-center text-[12px] text-[#222]">
  <div class="w-[232px] h-full pl-[2px] pt-[5px] border-r border-[#aaa] tracking-[-0.6px] leading-[21px] font-['Liberation_Sans',sans-serif]">
    <p>27.5259;14.4283</p><p>@5.2825;-8.8857</p>
  </div>
  <div class="w-[253px] h-full pl-[3px] pt-[5px] tracking-[-0.6px] leading-[21px] font-['Liberation_Sans',sans-serif]">
    <p>31.0781&lt;28°</p><p>@10.3374&lt;301°</p>
  </div>
  <span class="w-[167px] whitespace-nowrap">Seleccione la entidad o región</span>
  <svg class="w-[28px] h-[34px]" viewBox="0 0 28 34"><path d="M6 3q2 2 4 3" stroke="#777" fill="none"/><path d="M5 16c-2-9 3-12 9-12s9 6 12 14c2 7-2 14-9 14S6 26 5 16z" fill="#f4f4f4" stroke="#999"/><ellipse cx="12" cy="10" rx="1.800" ry="3" fill="#5a80c8"/></svg>
  <span class="ml-[191px] whitespace-nowrap">No hay entidades seleccionadas.</span>
</footer>
</body>
</html>
